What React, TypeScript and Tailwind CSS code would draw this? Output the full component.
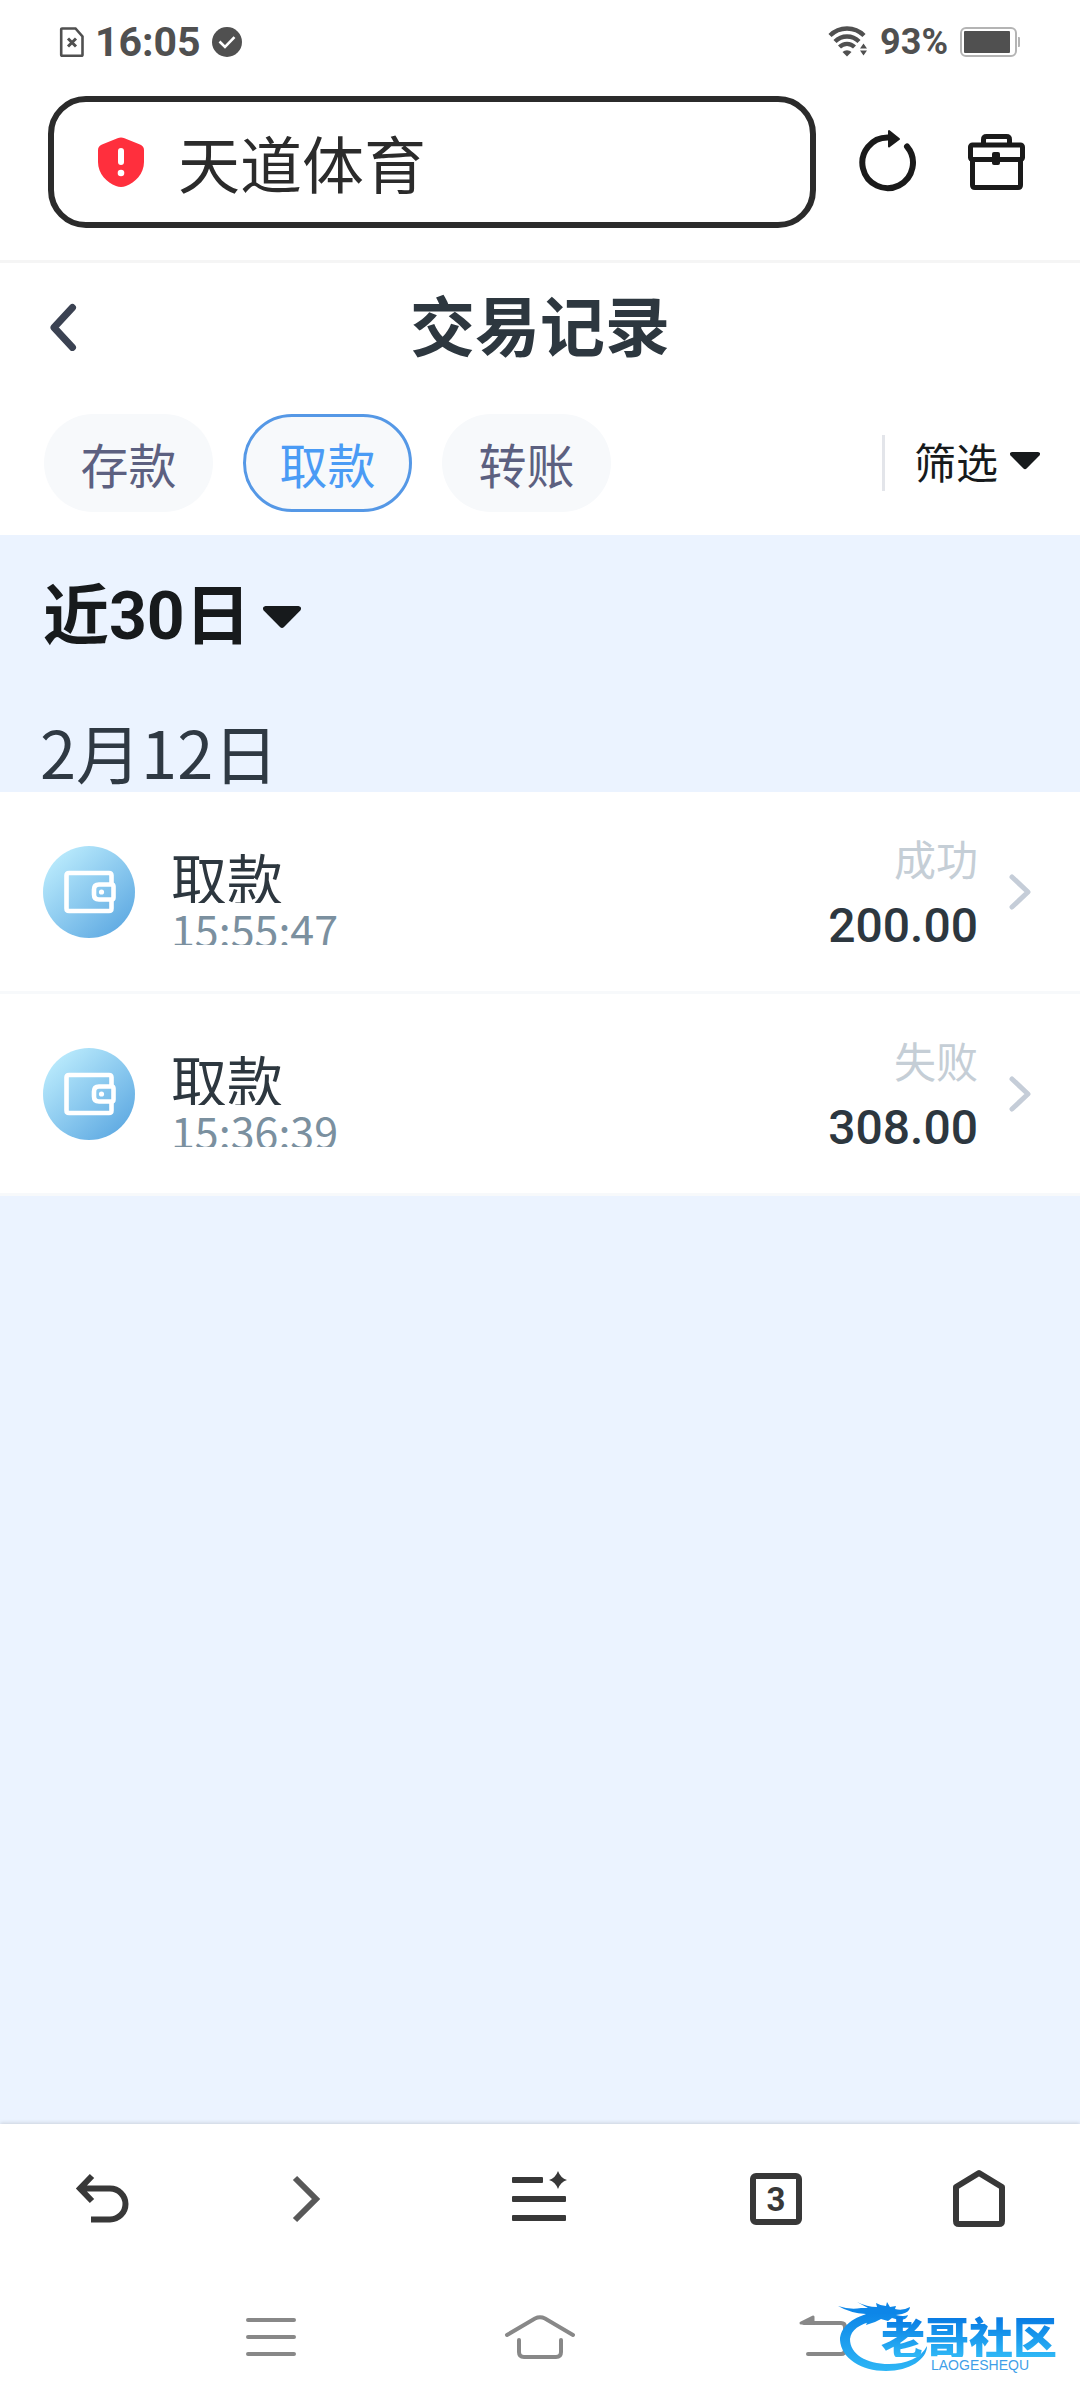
import React from "react";

const cjk = "font-['Noto_Sans_CJK_SC',sans-serif]";

function SimIcon() {
  return (
    <svg width="26" height="32" viewBox="0 0 26 32" fill="none" stroke="#505050" aria-hidden="true">
      <path d="M3 2.500h13.500l7 8V29a.8.8 0 0 1-.8.8H3a.8.8 0 0 1-.8-.8V3.300a.8.8 0 0 1 .8-.8Z" strokeWidth="2.600" />
      <path d="m9 12.500 8 8m0-8-8 8" strokeWidth="3" />
    </svg>
  );
}

function CheckBadge() {
  return (
    <svg width="32" height="32" viewBox="0 0 32 32" aria-hidden="true">
      <circle cx="16" cy="16" r="15" fill="#505050" />
      <path d="m8.500 15.500 5.500 5.500 9.500-9.800" fill="none" stroke="#fff" strokeWidth="2.600" />
    </svg>
  );
}

function WifiIcon() {
  return (
    <svg width="40" height="32" viewBox="0 0 40 32" fill="none" stroke="#505050" aria-hidden="true">
      <path d="M2 9.500a24 24 0 0 1 34 0" strokeWidth="4.400" />
      <path d="M7 15.500a17 17 0 0 1 24 0" strokeWidth="4.400" />
      <path d="M11.500 21a10.500 10.500 0 0 1 15 0" strokeWidth="4.200" />
      <path d="M14.500 26a6.500 6.500 0 0 1 9 0L19 30.500Z" fill="#505050" stroke="none" />
      <path d="M35.500 17.500 39 22.500h-7ZM35.500 29.500 39 24.500h-7Z" fill="#505050" stroke="none" />
    </svg>
  );
}

function BatteryIcon() {
  return (
    <svg width="60" height="32" viewBox="0 0 60 32" aria-hidden="true">
      <rect x="1" y="2" width="55" height="28" rx="5" fill="none" stroke="#b4b4b4" strokeWidth="2" />
      <rect x="4" y="5" width="46" height="22" rx="1" fill="#505050" />
      <path d="M58 11h1a1 1 0 0 1 1 1v8a1 1 0 0 1-1 1h-1Z" fill="#b4b4b4" />
    </svg>
  );
}

function ShieldIcon() {
  return (
    <svg width="46" height="50" viewBox="0 0 46 50" aria-hidden="true">
      <path d="M19.500 1.200q3.500-1.400 7 0L42 7.400Q46 9 46 13v12c0 12-9 20.500-18 24q-5 2-10 0C9 45.500 0 37 0 25V13q0-4 4-5.600Z" fill="#ff2f3d" />
      <rect x="20" y="11" width="6" height="17" rx="3" fill="#fff" />
      <circle cx="23" cy="36" r="3.300" fill="#fff" />
    </svg>
  );
}

function ReloadIcon() {
  return (
    <svg width="60" height="64" viewBox="0 0 60 64" fill="none" aria-hidden="true">
      <path d="M30 9.500A25.300 25.300 0 1 0 49 18.500" stroke="#1a1a1a" strokeWidth="6" strokeLinecap="round" />
      <path d="M31 3v15.500L41 11Z" fill="#1a1a1a" stroke="#1a1a1a" strokeWidth="2" strokeLinejoin="round" />
    </svg>
  );
}

function ToolboxIcon() {
  return (
    <svg width="58" height="58" viewBox="0 0 58 58" fill="none" stroke="#1a1a1a" strokeWidth="5" strokeLinejoin="round" aria-hidden="true">
      <path d="M16.500 10V6.500q0-3 3-3h20q3 0 3 3V10" />
      <rect x="3.500" y="12" width="52" height="14.500" rx="2" />
      <path d="M5.500 27v25q0 2.500 2.500 2.500h43q2.500 0 2.500-2.500V27" />
      <rect x="25" y="19" width="8" height="13" rx="2" fill="#1a1a1a" stroke="none" />
    </svg>
  );
}

function BackChevron() {
  return (
    <svg width="30" height="48" viewBox="0 0 30 48" fill="none" stroke="#3b4252" strokeWidth="7" strokeLinecap="round" strokeLinejoin="round" aria-hidden="true">
      <path d="M24.500 4.500 6 24.500l18.500 20" />
    </svg>
  );
}

function Caret({ width }: { width: number }) {
  return (
    <svg width={width} viewBox="0 0 38 22" fill="#171a1c" aria-hidden="true">
      <path d="M2.500 0h33q4 .8 1.800 4.500L21 21q-2 1.800-4 0L.7 4.500Q-1.500.8 2.500 0Z" />
    </svg>
  );
}

function WalletIcon({ id }: { id: string }) {
  return (
    <svg className="shrink-0" width="92" height="92" viewBox="0 0 92 92" fill="none" aria-hidden="true">
      <defs>
        <linearGradient id={id} x1="12" y1="10" x2="78" y2="82" gradientUnits="userSpaceOnUse">
          <stop offset="0" stopColor="#b9eafc" />
          <stop offset="1" stopColor="#62ace3" />
        </linearGradient>
      </defs>
      <circle cx="46" cy="46" r="46" fill={`url(#${id})`} />
      <g stroke="#fff" strokeWidth="4.600" strokeLinejoin="round">
        <path d="M68.500 37v-7.500q0-2.500-2.500-2.500H26q-2.500 0-2.500 2.500v33Q23.500 65 26 65h40q2.500 0 2.500-2.500V55" />
        <path d="M70.500 40.500q0-2-2-2H56q-5 0-5 5v5q0 5 5 5h12.500q2 0 2-2Z" />
      </g>
      <circle cx="58.500" cy="46" r="2.600" fill="#fff" />
    </svg>
  );
}

function RowChevron() {
  return (
    <svg width="24" height="38" viewBox="0 0 24 38" fill="none" stroke="#c5cdd8" strokeWidth="5" strokeLinecap="round" strokeLinejoin="round" aria-hidden="true">
      <path d="m4 4 16 15L4 34" />
    </svg>
  );
}

type Item = { id: string; title: string; time: string; status: string; amount: string };

const records: Item[] = [
  { id: "w1", title: "取款", time: "15:55:47", status: "成功", amount: "200.00" },
  { id: "w2", title: "取款", time: "15:36:39", status: "失败", amount: "308.00" },
];

function Row({ item }: { item: Item }) {
  return (
    <li className="border-b-[3px] border-[#f7f9fb] bg-white">
      <button type="button" className="flex h-[199px] w-full items-center pr-12 pl-[43px] text-left">
        <WalletIcon id={item.id} />
        <span className="ml-9 flex flex-1 flex-col gap-2 pt-3">
          <span className="h-[52px] overflow-hidden text-[56px] leading-[52px] text-[#2d373f]">{item.title}</span>
          <span className="h-[34px] overflow-hidden text-[43px] leading-[34px] text-[#7b909f]">{item.time}</span>
        </span>
        <span className="flex flex-col items-end pt-2">
          <span className="text-[42px] leading-[60px] text-[#c5ced6]">{item.status}</span>
          <span className="font-['Roboto',sans-serif] text-[48px] leading-[76px] font-medium text-[#2d373f]">{item.amount}</span>
        </span>
        <span className="ml-[30px]">
          <RowChevron />
        </span>
      </button>
    </li>
  );
}

function Watermark() {
  return (
    <div className="absolute top-6 right-[18px] h-[80px] w-[226px]">
      <svg className="absolute top-0 left-0" width="226" height="80" viewBox="0 0 226 80" aria-hidden="true">
        <defs>
          <linearGradient id="dragon" x1="0" y1="0" x2="0" y2="76" gradientUnits="userSpaceOnUse">
            <stop offset="0.200" stopColor="#0d86e8" />
            <stop offset="1" stopColor="#2fb8f6" />
          </linearGradient>
        </defs>
        <g fill="url(#dragon)">
          <path d="M34 15C14 20 4 31 4 42c1 18 21 31 46 31 24 0 41-12 41-25-6 12-21 18-38 18-23 0-39-10-39-25 1-9 9-15 24-18Z" />
          <path d="M2 8q12 4 23 2l7 0-11-6q10 5 20 5l-1-4q5 3 10 3l1-4 3 5 6-1-1 3q8 2 15-2 0 5-8 7l-6 1q8 2 12 0-1 5-9 5l-7-2-4 3-7-2-6 3-9 3 2-5q-4 2-8 3l6-9Q14 15 2 8Z" />
        </g>
      </svg>
      <span className="absolute top-[18px] left-[45px] bg-linear-to-b from-[#0878e2] to-[#2fb8f6] bg-clip-text text-[44px] leading-[41px] font-black whitespace-nowrap text-transparent">
        老哥社区
      </span>
      <span className="absolute top-[61px] left-[95px] font-['Liberation_Sans',sans-serif] text-[14px] leading-[12px] text-[#3f9fe8]">LAOGESHEQU</span>
    </div>
  );
}

export default function App() {
  return (
    <div className={`flex min-h-screen flex-col bg-[#ebf3ff] ${cjk}`}>
      <div className="bg-white">
        <div className="flex h-[84px] items-center justify-between pr-[60px] pl-[59px] font-['Roboto',sans-serif] font-bold text-[#505050]">
          <div className="flex items-center gap-[10px]">
            <SimIcon />
            <span className="text-[41px] leading-[44px]">16:05</span>
            <CheckBadge />
          </div>
          <div className="flex items-center gap-3">
            <WifiIcon />
            <span className="text-[36px] leading-[40px]">93%</span>
            <BatteryIcon />
          </div>
        </div>
        <div className="flex items-center border-b-[3px] border-[#f5f5f5] pt-3 pr-[55px] pb-8 pl-12">
          <div className="flex h-[132px] min-w-0 flex-1 items-center rounded-[38px] border-6 border-[#2b2b2b] pl-11">
            <ShieldIcon />
            <input aria-label="网址" defaultValue="天道体育" className="ml-[34px] h-24 min-w-0 flex-1 bg-transparent text-[62px] text-[#2b2b2b] outline-none" />
          </div>
          <button type="button" aria-label="刷新" className="ml-[42px] pb-1">
            <ReloadIcon />
          </button>
          <button type="button" aria-label="工具箱" className="ml-[49px]">
            <ToolboxIcon />
          </button>
        </div>
        <header className="grid h-32 grid-cols-[1fr_auto_1fr] items-center px-12">
          <button type="button" aria-label="返回" className="justify-self-start">
            <BackChevron />
          </button>
          <h1 className="pb-2 text-[65px] leading-[80px] font-bold text-[#2d373f]">交易记录</h1>
        </header>
        <div className="flex items-center py-[23px] pr-10 pl-11">
          <nav className="flex gap-[30px] text-[48px] leading-[60px] text-[#5c6080]">
            <button type="button" className="h-[98px] w-[169px] rounded-full bg-[#f7f9fb]">存款</button>
            <button type="button" aria-pressed="true" className="h-[98px] w-[169px] rounded-full border-3 border-[#5598e6] bg-[#f7f9fb] text-[#4a9bf5]">取款</button>
            <button type="button" className="h-[98px] w-[169px] rounded-full bg-[#f7f9fb]">转账</button>
          </nav>
          <div className="ml-auto h-14 w-[3px] bg-[#e3e5ea]" />
          <button type="button" className="ml-[29px] flex items-center gap-3 pb-1 text-[42px] leading-[60px] text-[#171a1c]">
            筛选
            <Caret width={30} />
          </button>
        </div>
      </div>

      <main className="flex-1">
        <button type="button" className="flex h-[164px] items-center gap-3 pl-[43px] font-['Roboto','Noto_Sans_CJK_SC',sans-serif] text-[66px] leading-[80px] font-bold text-[#171a1c]">
          近30日
          <Caret width={38} />
        </button>
        <h2 className="pt-3 pl-10 text-[65px] leading-[81px] text-[#2f3943]">2月12日</h2>
        <ul>
          {records.map((item) => (
            <Row key={item.id} item={item} />
          ))}
        </ul>
      </main>

      <nav className="grid h-[150px] grid-cols-[203fr_205fr_262fr_212fr_194fr] items-center justify-items-center bg-white pr-1 shadow-[0_-1px_4px_rgba(0,0,0,0.14)]">
        <button type="button" aria-label="后退">
          <svg width="56" height="56" viewBox="0 0 56 56" fill="none" stroke="#383838" strokeWidth="6" aria-hidden="true">
            <path d="M18 5 6 17.500 18 30M6 17.500h30a15.500 15.500 0 0 1 0 31H17" />
          </svg>
        </button>
        <button type="button" aria-label="前进">
          <svg width="30" height="52" viewBox="0 0 30 52" fill="none" stroke="#585858" strokeWidth="6" aria-hidden="true">
            <path d="m4 5 21 21L4 47" />
          </svg>
        </button>
        <button type="button" aria-label="菜单">
          <svg width="56" height="58" viewBox="0 0 56 58" fill="#383838" aria-hidden="true">
            <rect x="1" y="7" width="31" height="6" rx="1" />
            <rect x="1" y="26" width="54" height="6" rx="1" />
            <rect x="1" y="45" width="54" height="6" rx="1" />
            <path d="M47 1q2.500 7 9 9-6.500 2-9 9-2.500-7-9-9 6.500-2 9-9Z" />
          </svg>
        </button>
        <button type="button" aria-label="标签页" className="flex h-[52px] w-[52px] items-center justify-center rounded-md border-6 border-[#383838] font-['Roboto',sans-serif] text-[33px] leading-none font-bold text-[#383838]">
          3
        </button>
        <button type="button" aria-label="主页">
          <svg width="54" height="60" viewBox="0 0 54 60" fill="none" stroke="#383838" strokeWidth="6" strokeLinejoin="round" aria-hidden="true">
            <path d="M4 18 27 4l23 14v34q0 3-3 3H7q-3 0-3-3Z" />
          </svg>
        </button>
      </nav>

      <div className="relative grid h-[126px] grid-cols-3 items-center justify-items-center bg-white px-[136px]">
        <button type="button" aria-label="最近任务">
          <svg width="50" height="44" viewBox="0 0 50 44" stroke="#888" strokeWidth="4" strokeLinecap="round" aria-hidden="true">
            <path d="M2 5h46M2 22h46M2 39h46" />
          </svg>
        </button>
        <button type="button" aria-label="桌面">
          <svg width="72" height="44" viewBox="0 0 72 44" fill="none" stroke="#888" strokeWidth="4" strokeLinecap="round" aria-hidden="true">
            <path d="M3 20 31 3.500q5-2.500 10 0L69 20M15 25v12q0 5 5 5h32q5 0 5-5V25" />
          </svg>
        </button>
        <button type="button" aria-label="系统返回" className="pl-7">
          <svg width="48" height="44" viewBox="0 0 48 44" fill="none" stroke="#888" strokeWidth="4" strokeLinecap="round" aria-hidden="true">
            <path d="M5 8h37q4 0 4 4v23q0 4-4 4H9" />
            <path d="M2 8 14 2v6Z" fill="#888" strokeWidth="3" strokeLinejoin="round" />
          </svg>
        </button>
        <Watermark />
      </div>
    </div>
  );
}
